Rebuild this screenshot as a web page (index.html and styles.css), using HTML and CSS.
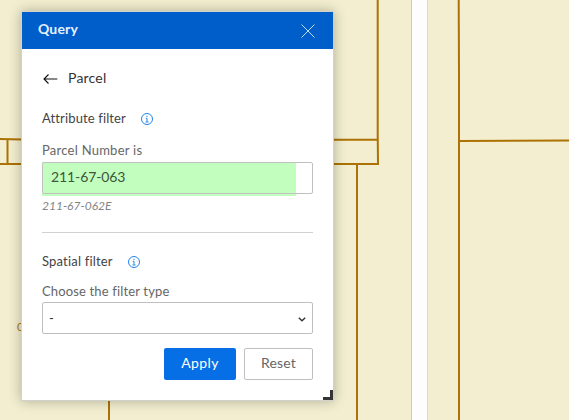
FILE: index.html
```html
<!DOCTYPE html>
<html lang="en">
<head>
<meta charset="utf-8">
<title>Query</title>
<link rel="stylesheet" href="styles.css">
</head>
<body>
<main class="map">
  <svg class="parcels" viewBox="0 0 569 420" aria-hidden="true">
    <rect class="road" x="411" y="0" width="17" height="420"/>
    <path class="edge" d="M411.5 0V420"/>
    <path class="edge light" d="M427.5 0V420"/>
    <path class="line" d="M377.7 0V135L378 164M458.7 0L459 72V420M459 141L569 140.5M0 139L22 139.6M7.5 139V164M0 164H22M333 139.7H378M333 164H379M357 164V420M109 400V420"/>
    <text class="lot" x="17" y="331">0</text>
  </svg>
  <section class="panel">
    <header class="header">
      <h1 class="title">Query</h1>
      <svg class="close" viewBox="0 0 14 14"><path d="M.5 .5L13.5 13.5M13.5 .5L.5 13.5"/></svg>
    </header>
    <div class="content">
      <div class="back">
        <svg class="arrow" viewBox="0 0 15 10"><path d="M14.3 5H1M5.5 .5L1 5L5.5 9.5"/></svg>
        <span class="layer">Parcel</span>
      </div>
      <div class="heading">
        <span class="attribute">Attribute filter</span>
        <svg class="info" viewBox="0 0 12 12"><circle cx="6" cy="6" r="5.5"/><path d="M6 2.7V4M4.8 5.3H6V8.8M4.5 9H7.5"/></svg>
      </div>
      <label class="label number" for="parcel">Parcel Number is</label>
      <div class="field"><input class="input" id="parcel" value="211-67-063"></div>
      <div class="hint">211-67-062E</div>
      <hr class="divider">
      <div class="heading">
        <span class="spatial">Spatial filter</span>
        <svg class="info" viewBox="0 0 12 12"><circle cx="6" cy="6" r="5.5"/><path d="M6 2.7V4M4.8 5.3H6V8.8M4.5 9H7.5"/></svg>
      </div>
      <div class="label type">Choose the filter type</div>
      <div class="select"><span>-</span><svg class="chevron" viewBox="0 0 8 5"><path d="M.8 .8L4 3.8L7.2 .8"/></svg></div>
      <div class="actions">
        <button class="button apply">Apply</button>
        <button class="button reset">Reset</button>
      </div>
    </div>
    <span class="grip"></span>
  </section>
</main>
</body>
</html>
```

FILE: styles.css
```css
* { box-sizing: border-box; }
body { margin: 0; font-family: Lato, "Liberation Sans", sans-serif; }
.map { position: relative; width: 569px; height: 420px; padding: 12px 22px; background: #f2eecf; overflow: hidden; }
.parcels { position: absolute; left: 0; top: 0; width: 569px; height: 420px; }
.road { fill: #fdfdfd; }
.edge { stroke: #cccbc4; stroke-width: 1; }
.edge.light { stroke: #d9d8cd; }
.line { fill: none; stroke: #ad7205; stroke-width: 2; }
.lot { fill: #b07612; font-size: 12px; }
.panel { position: relative; width: 311px; height: 388px; background: #fff; box-shadow: 0 0 0 1px #d2d2cd, 0 0 12px 1px rgba(0, 0, 0, .28); }
.header { display: flex; justify-content: space-between; align-items: center; height: 37px; padding: 1px 18px 0 16px; background: #005ecb; }
.title { margin: 0; color: #e6f1ff; font-size: 14px; line-height: 20px; font-weight: 700; letter-spacing: .15px; padding-bottom: 4px; }
.close { width: 14px; height: 14px; fill: none; stroke: #c2dcf7; stroke-width: 1; }
.content { padding: 18px 20px 0; }
.back { display: flex; align-items: center; height: 20px; gap: 10px; padding-left: 1px; }
.arrow { width: 15px; height: 10px; margin-top: 4px; fill: none; stroke: #111; stroke-width: 1.1; }
.layer { color: #333; font-size: 14px; letter-spacing: .2px; }
.heading { display: flex; align-items: center; height: 20px; gap: 15px; color: #444; font-size: 13px; line-height: 20px; }
.back + .heading { margin-top: 21px; }
.attribute { width: 84px; letter-spacing: .13px; white-space: nowrap; }
.spatial { width: 71px; letter-spacing: .18px; white-space: nowrap; }
.info { width: 12px; height: 12px; margin-top: 1px; fill: none; stroke: #2384e6; stroke-width: 1; }
.label { display: block; height: 20px; color: #666; font-size: 13px; line-height: 20px; white-space: nowrap; }
.number { margin-top: 12px; letter-spacing: .25px; }
.field { height: 34px; margin-top: 2px; background: linear-gradient(#c2ffbf, #c2ffbf) no-repeat 0 0 / 254px 34px; }
.input { display: block; width: 271px; height: 32px; padding: 0 8px 4px; border: 1px solid #bfc0bf; border-radius: 2px; outline: 0; background: transparent; color: #3c553b; font: 14px/20px Lato, sans-serif; letter-spacing: -.1px; }
.hint { height: 20px; color: #858585; font-size: 12px; line-height: 20px; font-style: italic; letter-spacing: 0; }
.divider { height: 1px; margin: 16px 0 18px; border: 0; background: #d0d0d0; }
.type { margin-top: 10px; letter-spacing: .15px; }
.select { display: flex; align-items: center; justify-content: space-between; height: 32px; margin-top: 1px; padding: 0 6px 0 6px; border: 1px solid #bfbfbf; border-radius: 2px; color: #333; font-size: 13px; }
.chevron { width: 8px; height: 5px; margin-top: 2px; fill: none; stroke: #333; stroke-width: 1.4; }
.actions { display: flex; justify-content: flex-end; gap: 8px; margin-top: 14px; }
.button { height: 32px; padding: 0 0 3px; border: 0; border-radius: 2px; font-family: inherit; font-size: 14px; }
.apply { width: 72px; background: #076fe5; color: #fff; letter-spacing: .4px; }
.reset { width: 69px; border: 1px solid #bfbfbf; background: #fff; color: #666; letter-spacing: .15px; }
.grip { position: absolute; right: 0; bottom: 0; width: 10px; height: 10px; border: solid #343434; border-width: 0 3px 3px 0; }
```
